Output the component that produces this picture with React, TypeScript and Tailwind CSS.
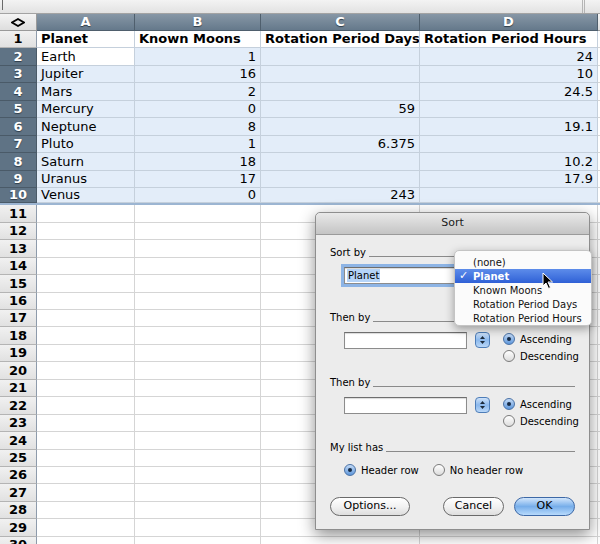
import React from "react";

const widths = ["w-[98px]", "w-[126px]", "w-[159px]", "w-[178px]"];
const letters = ["A", "B", "C", "D"];

const data: string[][] = [
  ["Planet", "Known Moons", "Rotation Period Days", "Rotation Period Hours"],
  ["Earth", "1", "", "24"],
  ["Jupiter", "16", "", "10"],
  ["Mars", "2", "", "24.5"],
  ["Mercury", "0", "59", ""],
  ["Neptune", "8", "", "19.1"],
  ["Pluto", "1", "6.375", ""],
  ["Saturn", "18", "", "10.2"],
  ["Uranus", "17", "", "17.9"],
  ["Venus", "0", "243", ""],
];

const menuItems = ["(none)", "Planet", "Known Moons", "Rotation Period Days", "Rotation Period Hours"];

function ColumnHeader() {
  return (
    <div className="flex h-[17px] shrink-0">
      <div className="w-[37px] shrink-0 flex items-center justify-center bg-gradient-to-b from-[#f4f4f4] to-[#dedede] border-r border-b border-[#9a9a9a]">
        <svg width="14" height="9" viewBox="0 0 14 9">
          <polygon points="7,1 13,4.5 7,8 1,4.5" fill="none" stroke="#000" strokeWidth="1.8" />
        </svg>
      </div>
      {letters.map((l, i) => (
        <div
          key={l}
          className={`${widths[i]} shrink-0 flex items-center justify-center font-bold text-[13px] text-white [text-shadow:0_1px_1px_#2e3c48] bg-gradient-to-b from-[#8797a6] to-[#65798b] border-r border-b border-[#4f5f6d]`}
        >
          {l}
        </div>
      ))}
      <div className="flex-1 bg-gradient-to-b from-[#f4f4f4] to-[#dedede] border-b border-[#9a9a9a]" />
    </div>
  );
}

function SheetRow({ n }: { n: number }) {
  const row = data[n - 1];
  const selected = n >= 2 && n <= 10;
  const header = n === 1;
  return (
    <div className={`flex h-[17.45px] shrink-0 ${n === 10 ? "border-b-2 border-[#9cb5d2]" : ""}`}>
      <div
        className={
          selected
            ? "w-[37px] shrink-0 flex items-center justify-center font-bold text-[13px] text-white [text-shadow:0_1px_1px_#2e3c48] bg-[#5f7385] border-r border-b border-[#4a5a68]"
            : "w-[37px] shrink-0 flex items-center justify-center font-bold text-[13px] text-black bg-gradient-to-b from-[#f1f1f1] to-[#e1e1e1] border-r border-b border-r-[#8e9bab] border-b-[#b4b4b4]"
        }
      >
        {n}
      </div>
      {widths.map((w, i) => {
        const text = row ? row[i] : "";
        const white = !selected || (n === 2 && i === 0);
        return (
          <div
            key={i}
            className={`${w} shrink-0 flex items-center px-[4px] text-[13px] text-black whitespace-nowrap overflow-hidden border-r border-b ${
              white ? "bg-white" : "bg-[#e3edf9]"
            } ${selected || header ? "border-[#c5d0dc]" : "border-[#d5d5d5]"} ${
              header ? "font-bold" : ""
            } ${i > 0 && !header ? "justify-end" : ""}`}
          >
            {text}
          </div>
        );
      })}
      <div className="flex-1 bg-white border-b border-[#d5d5d5]" />
    </div>
  );
}

function Radio({ on }: { on?: boolean }) {
  return on ? (
    <span className="w-[12px] h-[12px] shrink-0 rounded-full border border-[#4a72a6] bg-gradient-to-b from-[#c4dbf6] to-[#5d96da] flex items-center justify-center">
      <span className="w-[4px] h-[4px] rounded-full bg-[#162a44]" />
    </span>
  ) : (
    <span className="block w-[12px] h-[12px] shrink-0 rounded-full border border-[#7b7b7b] bg-gradient-to-b from-white to-[#dcdcdc]" />
  );
}

function Stepper() {
  return (
    <div className="w-[15px] h-[16px] shrink-0 rounded-[4px] border border-[#4d7db8] bg-gradient-to-b from-[#cfe2f8] via-[#8bb8ec] to-[#b9d7f8] flex items-center justify-center">
      <svg width="7" height="10" viewBox="0 0 7 10">
        <polygon points="3.5,1 6,4 1,4" fill="#1c2a3a" />
        <polygon points="1,6 6,6 3.5,9" fill="#1c2a3a" />
      </svg>
    </div>
  );
}

function GroupLabel({ label }: { label: string }) {
  return (
    <div className="flex items-end h-[12px] gap-[3px]">
      <span className="text-[10px] leading-[12px] text-black whitespace-nowrap">{label}</span>
      <span className="flex-1 border-b border-[#8a8a8a] mb-[2px]" />
    </div>
  );
}

function SortSection({ label, focused }: { label: string; focused?: boolean }) {
  return (
    <div className="flex flex-col">
      <GroupLabel label={label} />
      <div className="flex items-start mt-[8px] ml-[14px]">
        <div
          className={`w-[123px] h-[17px] shrink-0 bg-white border border-[#8c8c8c] border-t-[#6e6e6e] shadow-[inset_0_1px_1px_rgba(0,0,0,0.15)] flex items-center px-[2px] ${
            focused ? "ring-[3px] ring-[#8db4e5]" : ""
          }`}
        >
          {focused && <span className="bg-[#b5d4f8] text-[10px] leading-[13px] px-[1px]">Planet</span>}
        </div>
        <div className="ml-[8px]">
          <Stepper />
        </div>
        <div className="flex flex-col gap-[3px] ml-[13px]">
          <div className="flex items-center h-[14px] gap-[5px]">
            <Radio on />
            <span className="text-[10px]">Ascending</span>
          </div>
          <div className="flex items-center h-[14px] gap-[5px]">
            <Radio />
            <span className="text-[10px]">Descending</span>
          </div>
        </div>
      </div>
    </div>
  );
}

function Button({ children, primary }: { children: React.ReactNode; primary?: boolean }) {
  return (
    <div
      className={`h-[19px] rounded-full border flex items-center justify-center text-[11px] text-black ${
        primary
          ? "w-[61px] border-[#3d68a6] bg-gradient-to-b from-[#d2e6fb] via-[#77aeea] to-[#b7dafc]"
          : "border-[#6a6a6a] bg-gradient-to-b from-white via-[#f2f2f2] to-[#dedede]"
      }`}
    >
      {children}
    </div>
  );
}

function SortDialog() {
  return (
    <div className="absolute left-[315px] top-[212px] w-[275px] h-[318px] flex flex-col border border-[#8e8e8e] rounded-t-[5px] bg-[#ececec] shadow-[0_5px_16px_rgba(0,0,0,0.45)]">
      <div className="h-[22px] shrink-0 rounded-t-[5px] bg-gradient-to-b from-[#e9e9e9] to-[#c4c4c4] border-b border-[#9a9a9a] flex items-center justify-center text-[11px] text-[#1a1a1a]">
        Sort
      </div>
      <div className="flex flex-col pl-[14px] pr-[14px] pt-[12px]">
        <SortSection label="Sort by" focused />
        <div className="h-[14px]" />
        <SortSection label="Then by" />
        <div className="h-[14px]" />
        <SortSection label="Then by" />
        <div className="h-[14px]" />
        <GroupLabel label="My list has" />
        <div className="flex items-center h-[12px] mt-[10px] ml-[14px]">
          <Radio on />
          <span className="text-[10px] ml-[5px]">Header row</span>
          <span className="ml-[14px] flex">
            <Radio />
          </span>
          <span className="text-[10px] ml-[5px]">No header row</span>
        </div>
        <div className="flex justify-between mt-[21px]">
          <div className="w-[80px]">
            <Button>Options...</Button>
          </div>
          <div className="flex gap-[10px]">
            <div className="w-[61px]">
              <Button>Cancel</Button>
            </div>
            <Button primary>OK</Button>
          </div>
        </div>
      </div>
    </div>
  );
}

function PopupMenu() {
  return (
    <div className="absolute left-[454px] top-[250px] w-[138px] h-[76px] rounded-[5px] bg-[#fbfbfb] border border-[#c4c4c4] shadow-[0_3px_10px_rgba(0,0,0,0.35)] pt-[4px] flex flex-col">
      {menuItems.map((m) =>
        m === "Planet" ? (
          <div
            key={m}
            className="h-[14px] flex items-center bg-gradient-to-b from-[#5d8cea] to-[#2f60d6] text-white text-[10px] font-bold"
          >
            <span className="w-[18px] pl-[4px] text-[11px]">✓</span>
            {m}
          </div>
        ) : (
          <div key={m} className="h-[14px] flex items-center pl-[18px] text-[10px] text-[#111]">
            {m}
          </div>
        )
      )}
    </div>
  );
}

function Cursor() {
  return (
    <svg className="absolute left-[542px] top-[272px]" width="12" height="18" viewBox="0 0 12 18">
      <path
        d="M1 1 L1 14 L4 11 L6.5 16.5 L8.5 15.5 L6 10 L10.5 10 Z"
        fill="#000"
        stroke="#fff"
        strokeWidth="1"
        strokeLinejoin="round"
      />
    </svg>
  );
}

export default function App() {
  const rows = Array.from({ length: 30 }, (_, i) => i + 1);
  return (
    <div className="relative w-[600px] h-[544px] overflow-hidden bg-white font-['DejaVu_Sans',sans-serif]">
      <div className="flex flex-col h-full">
        <div className="h-[14px] shrink-0 flex bg-gradient-to-b from-[#f3f3f3] to-[#e2e2e2] border-b border-[#a3a3a3]">
          <div className="ml-[2px] w-px h-[10px] bg-[#6a6a6a]" />
          <div className="flex-1" />
          <div className="w-px bg-[#b5b5b5] mr-[1px]" />
          <div className="w-px bg-[#b5b5b5] mr-[15px]" />
        </div>
        <ColumnHeader />
        {rows.map((n) => (
          <SheetRow key={n} n={n} />
        ))}
      </div>
      <SortDialog />
      <PopupMenu />
      <Cursor />
    </div>
  );
}
